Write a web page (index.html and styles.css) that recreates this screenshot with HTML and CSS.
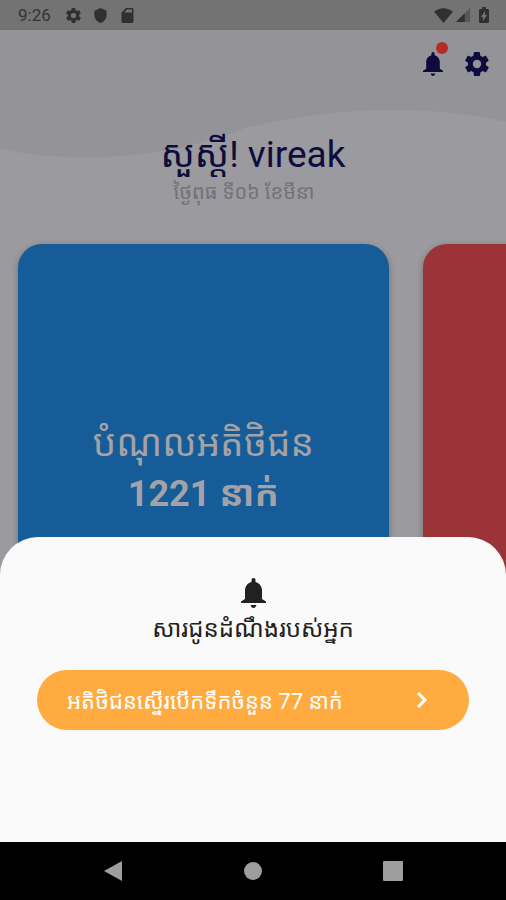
FILE: index.html
```html
<!DOCTYPE html>
<html lang="km">

<head>
    <meta charset="UTF-8">
    <meta name="viewport" content="width=device-width, initial-scale=1.0">
    <title>vireak</title>
    <link rel="stylesheet" href="styles.css">
</head>

<body>
    <div class="screen">
        <div class="status-bar">
            <span class="time">9:26</span>
            <svg class="status-icon" viewBox="2 2 20 20"><path d="M19.400 13a7.500 7.500 0 0 0 0-2l2.100-1.600a.5.5 0 0 0 .1-.6l-2-3.500a.5.5 0 0 0-.6-.2l-2.500 1a7.300 7.300 0 0 0-1.700-1l-.4-2.600a.5.5 0 0 0-.5-.4h-4a.5.5 0 0 0-.5.4L9 5.100a7.700 7.700 0 0 0-1.700 1l-2.500-1a.5.5 0 0 0-.6.2l-2 3.500a.5.5 0 0 0 .1.600L4.500 11a8 8 0 0 0 0 2l-2.100 1.600a.5.5 0 0 0-.1.600l2 3.500c.1.200.4.300.6.200l2.500-1c.5.400 1.100.7 1.700 1l.4 2.600c0 .3.200.5.500.5h4c.3 0 .5-.2.500-.5l.4-2.600a7.300 7.300 0 0 0 1.700-1l2.500 1c.2.100.5 0 .6-.2l2-3.500a.5.5 0 0 0-.1-.6zM12 15.500a3.500 3.500 0 1 1 0-7 3.500 3.500 0 0 1 0 7z"/></svg>
            <svg class="status-icon" viewBox="1 1 22 22"><path d="M12 1 3 5v6c0 5.500 3.800 10.700 9 12 5.200-1.300 9-6.500 9-12V5z"/></svg>
            <svg class="status-icon" viewBox="2 2 20 20"><path fill-rule="evenodd" d="M18 2h-8L4 8v12c0 1.100.9 2 2 2h12c1.100 0 2-.9 2-2V4c0-1.100-.9-2-2-2zm0 6H8l3-4h7z"/></svg>
            <div class="status-right">
                <svg class="wifi" viewBox="0 0 20 16"><path d="M0 4C6-1 14-1 20 4L10 16z"/></svg>
                <svg class="signal" viewBox="0 0 16 16"><path opacity=".4" d="M16 0v16H0z"/><path d="M10 6v10H0z"/></svg>
                <svg class="battery" viewBox="0 0 10 16"><path fill-rule="evenodd" d="M3 0h4v2h2a1 1 0 0 1 1 1v12a1 1 0 0 1-1 1H1a1 1 0 0 1-1-1V3a1 1 0 0 1 1-1h2zM6 4L2 10h2v4l4-6H6z"/></svg>
            </div>
        </div>

        <svg class="wave" viewBox="0 0 506 130" preserveAspectRatio="none">
            <path d="M0 0H506V92C420 73 330 78 245 98C170 128 80 135 0 119z"/>
        </svg>

        <div class="actions">
            <button class="icon-btn" type="button" aria-label="Notifications">
                <svg viewBox="0 0 25 30"><path d="M10.500 4V2a2 2 0 0 1 4 0v2C18.500 5 21 8.500 21 12.500V21l4 2.500V25H0v-1.500L4 21v-8.500C4 8.500 6.500 5 10.500 4zM9.500 27h6c-.6 1.800-1.600 3-3 3s-2.400-1.200-3-3z"/></svg>
                <span class="dot"></span>
            </button>
            <button class="icon-btn settings" type="button" aria-label="Settings">
                <svg viewBox="2 2 20 20"><path d="M19.400 13a7.500 7.500 0 0 0 0-2l2.100-1.600a.5.5 0 0 0 .1-.6l-2-3.500a.5.5 0 0 0-.6-.2l-2.500 1a7.300 7.300 0 0 0-1.700-1l-.4-2.600a.5.5 0 0 0-.5-.4h-4a.5.5 0 0 0-.5.4L9 5.100a7.700 7.700 0 0 0-1.700 1l-2.500-1a.5.5 0 0 0-.6.2l-2 3.500a.5.5 0 0 0 .1.600L4.500 11a8 8 0 0 0 0 2l-2.100 1.600a.5.5 0 0 0-.1.600l2 3.500c.1.200.4.300.6.200l2.500-1c.5.400 1.100.7 1.700 1l.4 2.600c0 .3.200.5.500.5h4c.3 0 .5-.2.500-.5l.4-2.600a7.300 7.300 0 0 0 1.700-1l2.500 1c.2.100.5 0 .6-.2l2-3.500a.5.5 0 0 0-.1-.6zM12 15.500a3.500 3.500 0 1 1 0-7 3.500 3.500 0 0 1 0 7z"/></svg>
            </button>
        </div>

        <div class="greeting">
            <h1>សួស្ដី! vireak</h1>
            <p>ថ្ងៃពុធ ទី០៦ ខែមីនា</p>
        </div>

        <div class="cards">
            <div class="card blue">
                <h2>បំណុលអតិថិជន</h2>
                <strong>1221 នាក់</strong>
            </div>
            <div class="card red"></div>
        </div>

        <div class="sheet">
            <svg class="sheet-bell" viewBox="0 0 25 30"><path d="M10.500 4V2a2 2 0 0 1 4 0v2C18.500 5 21 8.500 21 12.500V21l4 2.500V25H0v-1.500L4 21v-8.500C4 8.500 6.500 5 10.500 4zM9.500 27h6c-.6 1.800-1.600 3-3 3s-2.400-1.200-3-3z"/></svg>
            <h3>សារជូនដំណឹងរបស់អ្នក</h3>
            <button class="notice" type="button">
                <span>អតិថិជនស្នើរបើកទឹកចំនួន 77 នាក់</span>
                <svg viewBox="0 0 12 18"><path d="M2 2l7 7-7 7"/></svg>
            </button>
        </div>
    </div>

    <div class="nav-bar">
        <button type="button" aria-label="Back"><svg viewBox="0 0 20 20"><path d="M19 0v20L1 10z"/></svg></button>
        <button type="button" aria-label="Home"><svg viewBox="0 0 20 20"><circle cx="10" cy="10" r="9"/></svg></button>
        <button type="button" aria-label="Recent apps"><svg viewBox="0 0 20 20"><rect width="20" height="20" rx="1"/></svg></button>
    </div>
</body>

</html>
```

FILE: styles.css
```css
* {
    margin: 0;
    padding: 0;
    box-sizing: border-box;
}

body {
    font-family: Roboto, "Noto Sans Khmer", "Noto Sans", sans-serif;
    display: flex;
    flex-direction: column;
    height: 100vh;
    background-color: #000;
}

button {
    border: none;
    background: none;
    font-family: inherit;
    cursor: pointer;
}

svg {
    display: block;
}

.screen {
    position: relative;
    flex: 1;
    min-height: 0;
    overflow: hidden;
    background-color: #9b9a9f;
}

/* Status bar */
.status-bar {
    display: flex;
    align-items: center;
    gap: 12px;
    height: 30px;
    padding: 0 17px 0 18px;
    background-color: #737373;
    color: #343436;
    fill: #303032;
}

.time {
    font-size: 17px;
    margin-right: 3px;
}

.status-icon {
    width: 15px;
    height: 15px;
}

.status-right {
    display: flex;
    align-items: center;
    margin-left: auto;
}

.wifi {
    width: 19px;
    height: 15px;
}

.signal {
    width: 14px;
    height: 14px;
    margin: 0 9px 0 3px;
}

.battery {
    width: 10px;
    height: 16px;
}

/* Header */
.wave {
    position: absolute;
    top: 30px;
    left: 0;
    width: 100%;
    height: 130px;
    fill: #949398;
}

.actions {
    position: relative;
    display: flex;
    justify-content: flex-end;
    gap: 20px;
    padding: 22px 17px 0;
}

.icon-btn {
    position: relative;
    width: 24px;
    height: 24px;
    fill: #0d0c3c;
}

.icon-btn svg {
    width: 24px;
    height: 24px;
}

.dot {
    position: absolute;
    top: -10px;
    right: -3px;
    width: 12px;
    height: 12px;
    border-radius: 50%;
    background-color: #b52c25;
}

.greeting {
    position: relative;
    height: 168px;
    padding-top: 56px;
    text-align: center;
}

.greeting h1 {
    font-size: 37px;
    font-weight: 400;
    line-height: 46px;
    color: #0d0c3c;
}

.greeting p {
    padding-right: 18px;
    font-size: 20px;
    line-height: 28px;
    color: #737277;
}

/* Cards */
.cards {
    position: relative;
    display: flex;
    gap: 34px;
    padding-left: 18px;
}

.card {
    display: flex;
    flex-direction: column;
    align-items: center;
    justify-content: center;
    flex: 0 0 76%;
    height: 450px;
    border-radius: 24px;
    box-shadow: 0 2px 6px rgba(0, 0, 0, 0.3);
    color: #a3a2a7;
}

.blue {
    background-color: #165c98;
}

.red {
    background-color: #9b3338;
}

.card h2 {
    font-size: 37px;
    font-weight: 400;
    line-height: 50px;
}

.card strong {
    font-size: 36px;
    line-height: 50px;
}

/* Bottom sheet */
.sheet {
    position: absolute;
    left: 0;
    right: 0;
    bottom: 0;
    display: flex;
    flex-direction: column;
    align-items: center;
    height: 305px;
    padding: 41px 37px 0;
    border-radius: 38px 38px 0 0;
    background-color: #fafafa;
}

.sheet-bell {
    width: 25px;
    height: 30px;
    fill: #212121;
}

.sheet h3 {
    font-size: 24px;
    font-weight: 400;
    line-height: 42px;
    color: #212121;
}

.notice {
    display: flex;
    align-items: center;
    justify-content: space-between;
    width: 100%;
    height: 60px;
    margin-top: 20px;
    padding: 0 41px 0 30px;
    border-radius: 30px;
    background-color: #ffab40;
    color: #fff;
    font-size: 22px;
    white-space: nowrap;
}

.notice svg {
    width: 12px;
    height: 18px;
    fill: none;
    stroke: #fff;
    stroke-width: 3;
}

/* Navigation */
.nav-bar {
    display: flex;
    justify-content: center;
    gap: 120px;
    height: 58px;
}

.nav-bar svg {
    width: 20px;
    height: 20px;
    fill: #9e9e9e;
}
```
